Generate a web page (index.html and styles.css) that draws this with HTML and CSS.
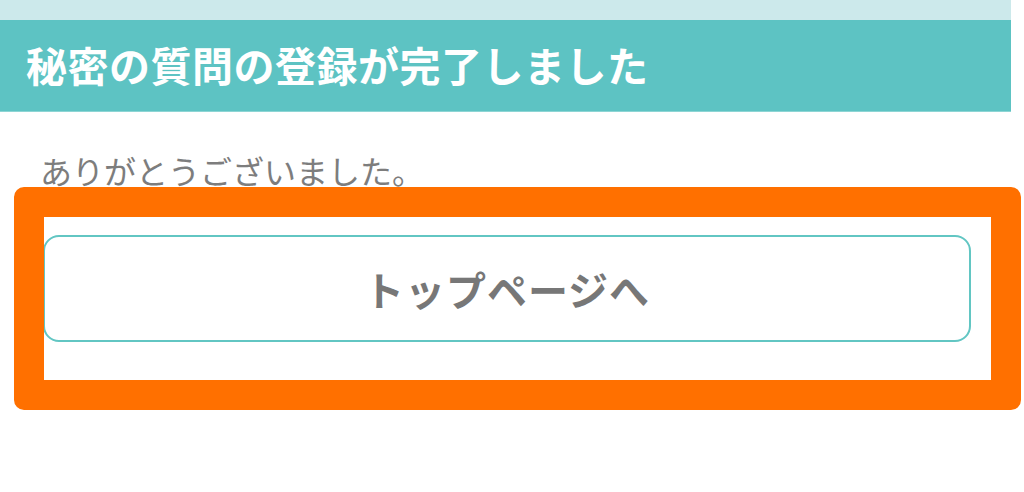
FILE: index.html
```html
<!DOCTYPE html>
<html lang="ja">
<head>
<meta charset="utf-8">
<title>秘密の質問の登録が完了しました</title>
<link rel="stylesheet" href="styles.css">
</head>
<body>
<div class="page">
  <div class="topband"></div>
  <header class="titlebar">
    <h1 class="title">秘密の質問の登録が完了しました</h1>
  </header>
  <main class="content">
    <p class="message">ありがとうございました。</p>
    <a class="top-button" href="#">トップページへ</a>
  </main>
  <div class="highlight"></div>
</div>
</body>
</html>
```

FILE: styles.css
```css
html, body {
  margin: 0;
  padding: 0;
  background: #ffffff;
}

body {
  font-family: "Noto Sans CJK JP", "Noto Sans", sans-serif;
  width: 1024px;
  height: 492px;
  overflow: hidden;
}

.page {
  position: relative;
  width: 1011px;
}

.topband {
  height: 20px;
  background: #cce9eb;
}

.titlebar {
  height: 89px;
  background: #5dc3c3;
  border-bottom: 1px solid #8dd5d4;
  display: flex;
  align-items: center;
  padding-left: 26px;
  padding-bottom: 2px;
  box-sizing: content-box;
}

.title {
  margin: 0;
  color: #ffffff;
  font-size: 41px;
  font-weight: 700;
  line-height: 1;
  letter-spacing: 0.5px;
}

.content {
  padding: 0 40px 0 43px;
  display: flex;
  flex-direction: column;
}

.message {
  margin: 42px 0 0 -3px;
  font-size: 32px;
  line-height: 1;
  color: #7d7d7d;
}

.top-button {
  margin-top: 49px;
  height: 107px;
  box-sizing: border-box;
  border: 2px solid #62c6c3;
  border-radius: 16px;
  display: flex;
  align-items: center;
  justify-content: center;
  color: #777777;
  font-size: 40px;
  font-weight: 700;
  letter-spacing: 1px;
  text-decoration: none;
  line-height: 1;
}

.highlight {
  position: absolute;
  left: 14px;
  top: 187px;
  width: 1007px;
  height: 223px;
  box-sizing: border-box;
  border: 30px solid #ff7000;
  border-radius: 10px;
  pointer-events: none;
}
```
